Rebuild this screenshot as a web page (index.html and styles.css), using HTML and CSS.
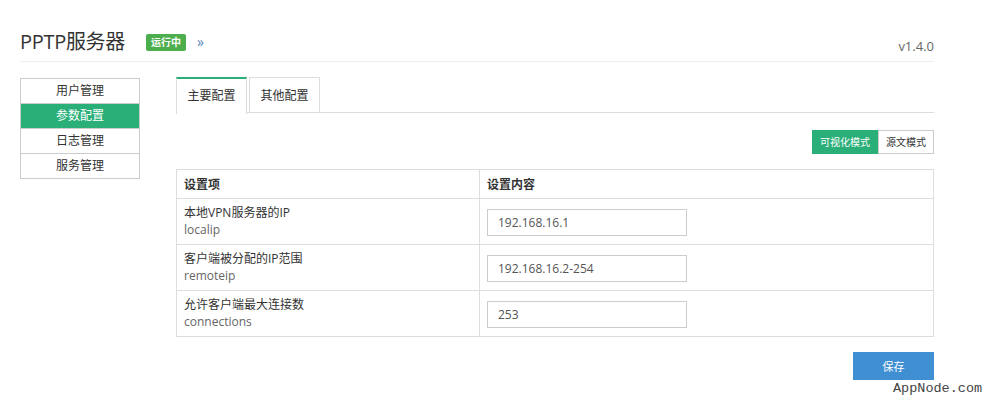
FILE: index.html
```html
<html>
<head>
<meta http-equiv="Content-Type" content="text/html; charset=UTF-8">
<title>PPTP服务器</title>
<link rel="stylesheet" href="styles.css">
</head>
<body>
<div class="page">
	<div class="header">
		<h1 class="title">PPTP服务器</h1>
		<span class="badge">运行中</span>
		<span class="more">»</span>
		<span class="version">v1.4.0</span>
	</div>
	<div class="main">
		<ul class="nav">
			<li>用户管理</li>
			<li class="active">参数配置</li>
			<li>日志管理</li>
			<li>服务管理</li>
		</ul>
		<div class="content">
			<div class="tabs">
				<div class="tab active">主要配置</div>
				<div class="tab">其他配置</div>
			</div>
			<div class="modes">
				<span class="mode on">可视化模式</span><span class="mode">源文模式</span>
			</div>
			<table class="conf">
				<tr><th class="c1">设置项</th><th>设置内容</th></tr>
				<tr>
					<td class="c1">本地VPN服务器的IP<div class="key">localip</div></td>
					<td><input class="field" value="192.168.16.1"></td>
				</tr>
				<tr>
					<td class="c1">客户端被分配的IP范围<div class="key">remoteip</div></td>
					<td><input class="field" value="192.168.16.2-254"></td>
				</tr>
				<tr>
					<td class="c1">允许客户端最大连接数<div class="key">connections</div></td>
					<td><input class="field" value="253"></td>
				</tr>
			</table>
			<div class="actions"><button class="save">保存</button></div>
		</div>
	</div>
</div>
<div class="mark">AppNode.com</div>
</body>
</html>
```

FILE: styles.css
```css
body{
	margin: 0;
	font-family: "Open Sans", "Noto Sans CJK SC", sans-serif;
	font-size: 12px;
	color: #333;
	background: #fff;
}

.page{
	width: 914px;
	padding: 0 20px;
}

.header{
	display: flex;
	align-items: center;
	height: 62px;
	border-bottom: 1px solid #eee;
	box-sizing: border-box;
	padding-top: 20px;
}

.title{
	margin: 0;
	font-size: 20px;
	font-weight: normal;
	color: #333;
	letter-spacing: -0.3px;
}

.badge{
	margin-left: 21px;
	background: #4cae4c;
	color: #fff;
	font-size: 10px;
	font-weight: bold;
	padding: 0 5px;
	height: 17px;
	line-height: 17px;
	border-radius: 2px;
	margin-top: 3px;
}

.more{
	margin-left: 11px;
	color: #5b87b8;
	font-size: 14px;
	margin-top: 2px;
}

.version{
	margin-left: auto;
	font-size: 13px;
	color: #666;
	margin-top: 10px;
}

.main{
	display: flex;
	gap: 36px;
	margin-top: 15px;
}

.nav{
	list-style: none;
	margin: 1px 0 0;
	padding: 0;
	width: 120px;
	box-sizing: border-box;
	border: 1px solid #ccc;
	border-bottom: none;
	align-self: flex-start;
}

.nav li{
	height: 24px;
	line-height: 24px;
	text-align: center;
	border-bottom: 1px solid #ccc;
	color: #333;
}

.nav li.active{
	background: #2aaf79;
	color: #fff;
}

.content{
	flex: 1;
}

.tabs{
	display: flex;
	gap: 2px;
	border-bottom: 1px solid #ddd;
	height: 35px;
}

.tab{
	width: 69px;
	height: 34px;
	line-height: 36px;
	text-align: center;
	border: 1px solid #ddd;
	border-bottom: none;
	color: #333;
}

.tab.active{
	border-top: 2px solid #2aaf79;
	height: 35px;
	line-height: 34px;
	background: #fff;
	margin-bottom: -1px;
}

.modes{
	display: flex;
	justify-content: flex-end;
	margin-top: 17px;
}

.mode{
	height: 22px;
	line-height: 22px;
	padding: 0 7px;
	border: 1px solid #ccc;
	font-size: 10px;
	color: #333;
}

.mode.on{
	background: #2aaf79;
	border-color: #2aaf79;
	color: #fff;
}

.conf{
	width: 100%;
	margin-top: 15px;
	border-collapse: collapse;
	border: 1px solid #ddd;
}

.conf th, .conf td{
	border: 1px solid #ddd;
	padding: 0 7px;
	text-align: left;
	vertical-align: middle;
}

.conf th{
	height: 29px;
	font-weight: bold;
	font-size: 12px;
}

.conf td{
	height: 46px;
	line-height: 16px;
	font-size: 12px;
}

.conf .c1{
	width: 288px;
}

.key{
	color: #666;
	font-size: 12px;
	margin-top: 1px;
}

.field{
	width: 200px;
	height: 27px;
	box-sizing: border-box;
	border: 1px solid #ccc;
	padding: 0 10px;
	font-family: "Open Sans", sans-serif;
	font-size: 12px;
	color: #555;
	margin-top: 1px;
}

.actions{
	display: flex;
	justify-content: flex-end;
	margin-top: 15px;
}

.save{
	width: 81px;
	height: 28px;
	border: none;
	background: #3f8fd2;
	color: #fff;
	font-family: "Noto Sans CJK SC", sans-serif;
	font-size: 11px;
}

.mark{
	position: absolute;
	left: 892px;
	top: 381px;
	font-family: "Liberation Mono", monospace;
	font-size: 13.5px;
	color: #444;
	background: #fff;
	padding: 0 1px;
}
```
